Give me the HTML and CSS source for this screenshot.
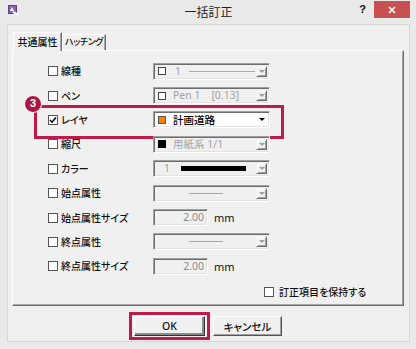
FILE: index.html
```html
<!DOCTYPE html>
<html lang="ja">
<head>
<meta charset="utf-8">
<title>一括訂正</title>
<link rel="stylesheet" href="styles.css">
</head>
<body>
<div class="window">
  <div class="titlebar">
    <div class="tb-left">
      <svg class="app-icon" width="11" height="11" viewBox="0 0 11 11">
        <rect x="0.5" y="0.5" width="8" height="8" fill="#8a64b4" stroke="#5e3f86" stroke-width="1"/>
        <path d="M2 6 L4 2 L6 6 Z" fill="#fff"/>
        <path d="M5 7 L9 9 L10 10" stroke="#fff" stroke-width="2" fill="none"/>
      </svg>
    </div>
    <div class="title">一括訂正</div>
    <div class="tb-right">
      <span class="help">?</span>
      <span class="close">
        <svg width="8" height="8" viewBox="0 0 8 8"><path d="M1 1 L7 7 M7 1 L1 7" stroke="#fff" stroke-width="1.6"/></svg>
      </span>
    </div>
  </div>

  <div class="client">
    <div class="tabs">
      <div class="tab active">共通属性</div>
      <div class="tab">ハッチング</div>
    </div>

    <div class="panel">
      <div class="rows">
        <div class="row">
          <span class="cb"></span><span class="label">線種</span>
          <div class="combo">
            <div class="val"><span class="sw sw-white"></span><span class="num">1</span><span class="hline long"></span></div>
            <span class="drop"><i></i></span>
          </div>
        </div>

        <div class="row">
          <span class="cb"></span><span class="label">ペン</span>
          <div class="combo">
            <div class="val"><span class="sw sw-white"></span><span class="txt pre">Pen 1    [0.13]</span></div>
            <span class="drop"><i></i></span>
          </div>
        </div>

        <div class="row hl">
          <span class="badge">3</span>
          <span class="cb checked"><svg width="8" height="8" viewBox="0 0 8 8"><path d="M1 4 L3 6.2 L7 1.5" stroke="#000" stroke-width="1.5" fill="none"/></svg></span><span class="label">レイヤ</span>
          <div class="combo enabled">
            <div class="val"><span class="sw sw-orange"></span><span class="txt dark">計画道路</span></div>
            <span class="drop"><i></i></span>
          </div>
        </div>

        <div class="row">
          <span class="cb"></span><span class="label">縮尺</span>
          <div class="combo">
            <div class="val"><span class="sw sw-black"></span><span class="txt">用紙系 1/1</span></div>
            <span class="drop"><i></i></span>
          </div>
        </div>

        <div class="row">
          <span class="cb"></span><span class="label">カラー</span>
          <div class="combo">
            <div class="val"><span class="num n-color">1</span><span class="bar"></span></div>
            <span class="drop"><i></i></span>
          </div>
        </div>

        <div class="row">
          <span class="cb"></span><span class="label">始点属性</span>
          <div class="combo">
            <div class="val center"><span class="hline short"></span></div>
            <span class="drop"><i></i></span>
          </div>
        </div>

        <div class="row">
          <span class="cb"></span><span class="label">始点属性サイズ</span>
          <div class="field">2.00</div><span class="unit">mm</span>
        </div>

        <div class="row">
          <span class="cb"></span><span class="label">終点属性</span>
          <div class="combo">
            <div class="val center"><span class="hline short"></span></div>
            <span class="drop"><i></i></span>
          </div>
        </div>

        <div class="row">
          <span class="cb"></span><span class="label">終点属性サイズ</span>
          <div class="field">2.00</div><span class="unit">mm</span>
        </div>
      </div>

      <div class="keep">
        <span class="cb"></span><span class="keep-label">訂正項目を保持する</span>
      </div>
    </div>

    <div class="buttons">
      <div class="ok-frame"><button class="btn default">OK</button></div>
      <button class="btn">キャンセル</button>
    </div>
  </div>
</div>
</body>
</html>
```

FILE: styles.css
```css
* {
  box-sizing: border-box;
  margin: 0;
  padding: 0;
}

html, body {
  width: 416px;
  height: 349px;
  overflow: hidden;
  background: #e9e9e9;
}

body {
  font-family: "Noto Sans", "Noto Sans CJK JP", sans-serif;
  font-size: 10.5px;
  color: #111;
  font-feature-settings: "palt";
}

.window {
  width: 416px;
  height: 349px;
  display: flex;
  flex-direction: column;
  padding: 0 6px 7px 7px;
}

/* ---------- title bar ---------- */
.titlebar {
  height: 24px;
  display: grid;
  grid-template-columns: 1fr auto 1fr;
  align-items: start;
}

.tb-left {
  padding: 5px 0 0 1px;
  display: flex;
}

.title {
  font-family: "Noto Sans CJK JP", sans-serif;
  font-size: 12px;
  line-height: 24px;
  color: #222;
}

.tb-right {
  display: flex;
  justify-content: flex-end;
  align-items: flex-start;
}

.help {
  font-family: "Liberation Sans", sans-serif;
  font-weight: bold;
  font-size: 11px;
  line-height: 18px;
  margin-right: 8px;
  color: #111;
}

.close {
  width: 36px;
  height: 17px;
  margin-top: 1px;
  background: #c75050;
  display: flex;
  align-items: center;
  justify-content: center;
}

/* ---------- client ---------- */
.client {
  flex: 1;
  background: #f0f0f0;
  border: 1px solid #d6d6d6;
  padding: 7px 5px 0 4px;
  display: flex;
  flex-direction: column;
}

.tabs {
  height: 18px;
  display: flex;
  align-items: flex-end;
  padding-left: 1px;
}

.tab {
  height: 16px;
  font-family: "Noto Sans CJK JP", sans-serif;
  font-size: 10px;
  font-weight: 500;
  line-height: 14px;
  text-align: center;
  white-space: nowrap;
  overflow: hidden;
  color: #111;
  border: 1px solid;
  border-color: #fff #6e6e6e transparent #fff;
  border-bottom: 0;
  box-shadow: inset -1px 0 #a8a8a8;
  background: #f0f0f0;
}

.tab.active {
  width: 49px;
  height: 19px;
  margin-bottom: -1px;
  position: relative;
  z-index: 1;
  line-height: 17px;
}

.tab:not(.active) {
  width: 44px;
  font-size: 9px;
  letter-spacing: -0.4px;
}

.panel {
  height: 256px;
  border: 1px solid;
  border-color: #fff #6e6e6e #6e6e6e #fff;
  box-shadow: inset -1px -1px #a8a8a8;
  padding-top: 8px;
  display: flex;
  flex-direction: column;
}

.rows {
  display: flex;
  flex-direction: column;
}

.row {
  height: 24.4px;
  display: flex;
  align-items: center;
  padding-left: 35px;
  position: relative;
}

.cb {
  width: 10px;
  height: 10px;
  border: 1px solid #555;
  background: #fff;
  flex: none;
  display: flex;
  align-items: center;
  justify-content: center;
}

.label {
  margin-left: 3px;
  width: 92px;
  font-family: "Noto Sans CJK JP", sans-serif;
  font-size: 10px;
  font-weight: 500;
  line-height: 14px;
  color: #111;
}

/* highlighted row annotation */
.row.hl::after {
  content: "";
  position: absolute;
  left: 21px;
  top: -3px;
  width: 244px;
  height: 28px;
  border: 3px solid #bf1a4a;
  pointer-events: none;
}

.badge {
  position: absolute;
  left: 11px;
  top: -13px;
  width: 18px;
  height: 18px;
  border-radius: 50%;
  background: #a8183f;
  border: 1.5px solid #fff;
  color: #fff;
  font-family: "Liberation Sans", sans-serif;
  font-weight: bold;
  font-size: 11px;
  line-height: 15px;
  text-align: center;
  z-index: 2;
}

/* combo boxes */
.combo {
  width: 117px;
  height: 17px;
  display: flex;
  border: 1px solid;
  border-color: #a0a0a0 #fff #fff #a0a0a0;
  box-shadow: inset 1px 1px #6e6e6e, inset -1px -1px #e3e3e3;
  background: #f0f0f0;
  padding: 1px 2px 1px 4px;
}

.combo.enabled {
  background: #fff;
}

.val {
  flex: 1;
  display: flex;
  align-items: center;
  min-width: 0;
}

.val.center {
  justify-content: center;
  padding-right: 2px;
}

.sw {
  width: 8px;
  height: 8px;
  flex: none;
  border: 1px solid #444;
  margin-right: 7px;
}

.sw-white { background: #fff; }
.sw-orange { background: #ff8000; border-color: #555; }
.sw-black { background: #000; border-color: #000; }

.txt, .num {
  color: #a3a3a3;
  line-height: 13px;
  white-space: nowrap;
}

.pre { white-space: pre; }

.txt.dark {
  color: #000;
  font-family: "Noto Sans CJK JP", sans-serif;
  font-weight: 500;
}

.num {
  margin-left: 2px;
}

.n-color {
  margin-left: 6px;
}

.hline {
  height: 1px;
  background: #a8a8a8;
  flex: none;
}

.hline.long {
  width: 66px;
  margin-left: 8px;
}

.hline.short {
  width: 34px;
}

.bar {
  width: 65px;
  height: 5px;
  background: #000;
  margin-left: 11px;
  flex: none;
}

.drop {
  width: 11px;
  margin: 1px 0;
  flex: none;
  border: 1px solid;
  border-color: #f0f0f0 #6e6e6e #6e6e6e #f0f0f0;
  box-shadow: inset 1px 1px #fff, inset -1px -1px #a0a0a0;
  display: flex;
  align-items: center;
  justify-content: center;
}

.drop i {
  width: 0;
  height: 0;
  border-left: 3px solid transparent;
  border-right: 3px solid transparent;
  border-top: 3px solid #a0a0a0;
}

.combo.enabled .drop {
  background: #fff;
  border-color: #fff;
  box-shadow: none;
}

.combo.enabled .drop i {
  border-top-color: #000;
}

/* numeric fields */
.field {
  width: 55px;
  height: 17px;
  border: 1px solid;
  border-color: #a0a0a0 #fff #fff #a0a0a0;
  box-shadow: inset 1px 1px #6e6e6e, inset -1px -1px #e3e3e3;
  background: #f0f0f0;
  color: #8c8c8c;
  text-align: right;
  padding-right: 3px;
  line-height: 15px;
}

.unit {
  margin-left: 6px;
  color: #111;
  font-size: 11px;
}

/* keep checkbox */
.keep {
  margin-top: 5px;
  height: 16px;
  display: flex;
  align-items: center;
  padding-left: 251px;
}

.keep-label {
  margin-left: 5px;
  font-family: "Noto Sans CJK JP", sans-serif;
  font-size: 10px;
  font-weight: 500;
  color: #111;
}

/* buttons */
.buttons {
  margin-top: 6px;
  display: flex;
  align-items: center;
  gap: 3px;
  padding-left: 117px;
}

.ok-frame {
  border: 3px solid #bf1a4a;
  padding: 1px 2px;
  display: flex;
}

.btn {
  width: 69px;
  height: 20px;
  font-family: "Noto Sans", "Noto Sans CJK JP", sans-serif;
  font-size: 10.5px;
  font-weight: 500;
  color: #111;
  background: #f0f0f0;
  border: 1px solid;
  border-color: #fff #555 #555 #fff;
  box-shadow: inset -1px -1px #a0a0a0;
  font-feature-settings: "palt";
}

.btn.default {
  width: 71px;
  border-color: #fff #333 #333 #fff;
  box-shadow: inset -2px -2px #8a8a8a;
}
```
